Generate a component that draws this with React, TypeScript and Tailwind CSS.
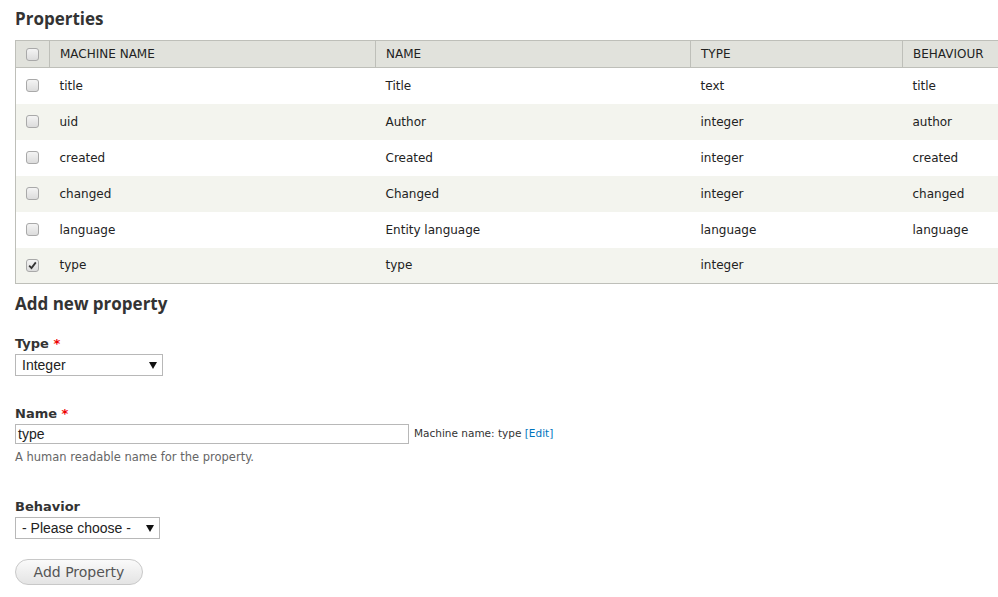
const ROWS = [
  { machine: 'title', name: 'Title', type: 'text', behaviour: 'title', checked: false },
  { machine: 'uid', name: 'Author', type: 'integer', behaviour: 'author', checked: false },
  { machine: 'created', name: 'Created', type: 'integer', behaviour: 'created', checked: false },
  { machine: 'changed', name: 'Changed', type: 'integer', behaviour: 'changed', checked: false },
  { machine: 'language', name: 'Entity language', type: 'language', behaviour: 'language', checked: false },
  { machine: 'type', name: 'type', type: 'integer', behaviour: '', checked: true },
]

const FONT = "font-['Lucida_Sans_Unicode','DejaVu_Sans',sans-serif]"
const HEAD = "font-['Open_Sans',sans-serif] text-[17px] font-bold leading-[22px] text-[#333]"

function Box({ checked }: { checked: boolean }) {
  return (
    <span className="flex h-[13px] w-[13px] items-center justify-center rounded-[3px] border border-[#a9a9a9] bg-gradient-to-b from-[#f4f4f4] to-[#dcdcdc]">
      {checked && (
        <svg width="9" height="9" viewBox="0 0 9 9">
          <path d="M1.2 4.6 L3.5 7 L7.8 1.4" fill="none" stroke="#333" strokeWidth="1.8" />
        </svg>
      )}
    </span>
  )
}

function Select({ value, width }: { value: string; width: string }) {
  return (
    <div
      className={`flex h-[22px] items-center justify-between border border-[#b8b8b8] bg-white pl-[6px] pr-[5px] font-['Liberation_Sans',Arial,sans-serif] text-[14px] text-[#222] ${width}`}
    >
      <span>{value}</span>
      <svg width="8" height="7" viewBox="0 0 8 7">
        <path d="M0 0 H8 L4 7 Z" fill="#111" />
      </svg>
    </div>
  )
}

export default function App() {
  return (
    <div className={`min-h-[597px] w-[998px] overflow-hidden bg-white text-[#222] ${FONT}`}>
      <div className="pl-[15px] pt-[8px]">
        <h2 className={HEAD}>Properties</h2>

        <table className="mt-[10px] w-[1000px] table-fixed border-collapse border border-[#bebfb9] text-[12px]">
          <colgroup>
            <col className="w-[34px]" />
            <col className="w-[326px]" />
            <col className="w-[315px]" />
            <col className="w-[212px]" />
            <col />
          </colgroup>
          <thead>
            <tr className="h-[27px] border-b border-[#bebfb9] bg-[#e1e2dc] text-left font-normal">
              <th className="border-r border-[#bebfb9] pl-[10px]">
                <Box checked={false} />
              </th>
              <th className="border-r border-[#bebfb9] pl-[10px] font-normal">MACHINE NAME</th>
              <th className="border-r border-[#bebfb9] pl-[10px] font-normal">NAME</th>
              <th className="border-r border-[#bebfb9] pl-[10px] font-normal">TYPE</th>
              <th className="pl-[10px] font-normal">BEHAVIOUR</th>
            </tr>
          </thead>
          <tbody>
            {ROWS.map((r, i) => (
              <tr key={r.machine} className={`h-[36px] ${i % 2 === 1 ? 'bg-[#f3f4ee]' : 'bg-white'}`}>
                <td className="pl-[10px]">
                  <Box checked={r.checked} />
                </td>
                <td className="pl-[10px]">{r.machine}</td>
                <td className="pl-[10px]">{r.name}</td>
                <td className="pl-[10px]">{r.type}</td>
                <td className="pl-[10px]">{r.behaviour}</td>
              </tr>
            ))}
          </tbody>
        </table>

        <h2 className={`mt-[9px] ${HEAD}`}>Add new property</h2>

        {/* Type */}
        <div className="mt-[20px]">
          <label className="mb-[2px] block text-[13px] font-bold leading-[17px] text-[#333]">
            Type <span className="text-[#e00]">*</span>
          </label>
          <Select value="Integer" width="w-[148px]" />
        </div>

        {/* Name */}
        <div className="mt-[29px]">
          <label className="mb-[2px] block text-[13px] font-bold leading-[17px] text-[#333]">
            Name <span className="text-[#e00]">*</span>
          </label>
          <div className="flex items-center gap-[5px]">
            <div className="flex h-[20px] w-[394px] items-center border border-[#b8b8b8] bg-white px-[2px] font-['Liberation_Sans',Arial,sans-serif] text-[14px]">
              type
            </div>
            <span className="text-[10.5px] text-[#333]">
              Machine name: type <span className="text-[#0074bd]">[Edit]</span>
            </span>
          </div>
          <p className="mt-[5px] text-[11.5px] text-[#666]">A human readable name for the property.</p>
        </div>

        {/* Behavior */}
        <div className="mt-[32px]">
          <label className="mb-[2px] block text-[13px] font-bold leading-[17px] text-[#333]">Behavior</label>
          <Select value="- Please choose -" width="w-[145px]" />
        </div>

        <button className="mt-[20px] h-[26px] w-[128px] rounded-full border border-[#c8c8c8] bg-gradient-to-b from-[#fafafa] to-[#e4e4e4] text-[14px] text-[#555]">
          Add Property
        </button>
      </div>
    </div>
  )
}
